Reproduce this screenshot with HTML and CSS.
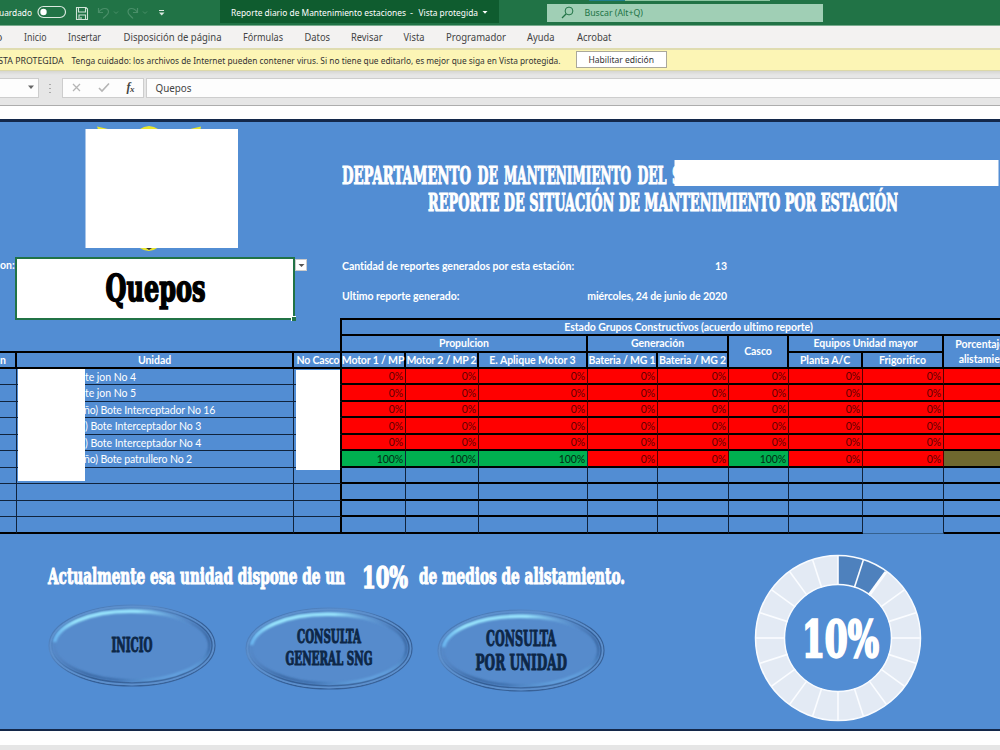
FILE: index.html
```html
<!DOCTYPE html>
<html lang="es">
<head>
<meta charset="utf-8">
<title>Reporte diario de Mantenimiento estaciones</title>
<link rel="stylesheet" href="styles.css">
</head>
<body>
<header class="titlebar">
  <svg class="quick" width="220" height="25" viewBox="0 0 220 25">
    <text x="-7" y="16" class="ui-w" textLength="39" lengthAdjust="spacingAndGlyphs">Guardado</text>
    <rect x="38" y="6.500" width="27.500" height="11" rx="5.500" fill="none" stroke="#dbe9e0" stroke-width="1.200"/>
    <circle cx="43.500" cy="12" r="3.200" fill="#fff"/>
    <path d="M76.500 7.500H86L87.500 9V19.500H76.500ZM78.500 7.500V12H85.500V7.500M79 19.500V15H85.500V19.500M81 19V17" fill="none" stroke="#cfe3d7" stroke-width="1.100"/>
    <path d="M98.500 8V12.500H103M98.500 12.500C102 7 108.500 7.500 108.500 12C108.500 15 105 16 103 18.500" fill="none" stroke="#4a8f69" stroke-width="1.200"/>
    <path d="M114 11.500L116 13.500L118 11.500" fill="none" stroke="#4a8f69"/>
    <path d="M137.500 8V12.500H133M137.500 12.500C134 7 128 7.500 128 12C128 15 131 16 133 18.500" fill="none" stroke="#4a8f69" stroke-width="1.200"/>
    <path d="M143 11.500L145 13.500L147 11.500" fill="none" stroke="#4a8f69"/>
    <path d="M159 10.500H164" stroke="#dbe9e0"/><path d="M159 12.500H164.500L161.700 15.500Z" fill="#dbe9e0"/>
  </svg>
  <div class="doc-name"><svg width="279" height="23">
    <text x="11" y="15.500" class="ui-w" textLength="175" lengthAdjust="spacingAndGlyphs">Reporte diario de Mantenimiento estaciones</text>
    <text x="190" y="15.500" class="ui-w">-</text>
    <text x="198.500" y="15.500" class="ui-w" textLength="59.500" lengthAdjust="spacingAndGlyphs">Vista protegida</text>
    <path d="M262.500 11H267.500L265 13.800Z" fill="#fff"/>
  </svg></div>
  <div class="search"><svg width="276" height="18">
    <circle cx="22" cy="7" r="3.900" fill="none" stroke="#217346"/><path d="M19 10L15 14" stroke="#217346" stroke-width="1.200"/>
    <text x="37.500" y="12" class="ui-g" textLength="58.500" lengthAdjust="spacingAndGlyphs">Buscar (Alt+Q)</text>
  </svg></div>
  <i class="strip"></i>
</header>
<nav class="tabs"><svg width="1000" height="22">
  <text x="-4" y="15">o</text>
  <text x="24" y="15" textLength="22.500" lengthAdjust="spacingAndGlyphs">Inicio</text>
  <text x="68" y="15" textLength="33" lengthAdjust="spacingAndGlyphs">Insertar</text>
  <text x="123.500" y="15" textLength="98" lengthAdjust="spacingAndGlyphs">Disposición de página</text>
  <text x="243" y="15" textLength="40" lengthAdjust="spacingAndGlyphs">Fórmulas</text>
  <text x="304.500" y="15" textLength="25.500" lengthAdjust="spacingAndGlyphs">Datos</text>
  <text x="351" y="15" textLength="31.500" lengthAdjust="spacingAndGlyphs">Revisar</text>
  <text x="403.500" y="15" textLength="21" lengthAdjust="spacingAndGlyphs">Vista</text>
  <text x="446" y="15" textLength="60" lengthAdjust="spacingAndGlyphs">Programador</text>
  <text x="527" y="15" textLength="27.500" lengthAdjust="spacingAndGlyphs">Ayuda</text>
  <text x="577" y="15" textLength="34.500" lengthAdjust="spacingAndGlyphs">Acrobat</text>
</svg></nav>
<div class="warning">
  <svg width="576" height="20">
    <text x="-10" y="11.500" textLength="73.500" lengthAdjust="spacingAndGlyphs">VISTA PROTEGIDA</text>
    <text x="71.500" y="11.500" textLength="489" lengthAdjust="spacingAndGlyphs">Tenga cuidado: los archivos de Internet pueden contener virus. Si no tiene que editarlo, es mejor que siga en Vista protegida.</text>
  </svg>
  <button class="enable"><svg width="89" height="15"><text x="11.500" y="11" textLength="65.500" lengthAdjust="spacingAndGlyphs">Habilitar edición</text></svg></button>
</div>
<div class="formula">
  <div class="fbox name-box"><svg width="38" height="17"><path d="M28 6.500H34L31 10Z" fill="#666"/></svg></div>
  <div class="dots"></div>
  <div class="fbox fx"><svg width="80" height="17">
    <path d="M10 5L17 12M17 5L10 12" stroke="#b5b5b5" stroke-width="1.300"/>
    <path d="M36 9L39 12L46 4.500" fill="none" stroke="#b5b5b5" stroke-width="1.600"/>
    <text x="63.500" y="12" class="fxt">f</text><text x="67" y="12.500" class="fxs">x</text>
  </svg></div>
  <div class="fbox value"><svg width="100" height="17"><text x="8.500" y="12.500" textLength="36" lengthAdjust="spacingAndGlyphs">Quepos</text></svg></div>
</div>
<main class="sheet">
  <section class="top">
    <div class="station-side">
      <svg class="crest" width="160" height="126" viewBox="80 126 160 126">
        <path d="M97 126.500L110 129.500H98ZM201 126.500L188 129.500H200.500ZM139 129.500Q149 122.500 159 129.500ZM139 247.500H158Q149 254.500 139 247.500Z" fill="#e9e62c"/>
        <path d="M146 248H152L149 250Z" fill="#333"/>
        <rect x="85.500" y="129" width="152.500" height="119" fill="#fff"/>
      </svg>
      <div class="station-row">
        <span class="est">on:</span>
        <div class="station"><svg width="274" height="58"><text class="disp station-name" x="88.500" y="40.500" textLength="100" lengthAdjust="spacingAndGlyphs">Quepos</text></svg><i class="handle"></i></div>
        <div class="drop"><svg width="11" height="11"><path d="M2.500 4H8.500L5.500 7Z" fill="#555"/></svg></div>
      </div>
    </div>
    <div class="report-side">
      <svg class="heading" width="658" height="60">
        <g class="disp light">
          <text x="0" y="27.500" textLength="129" lengthAdjust="spacingAndGlyphs">DEPARTAMENTO</text>
          <text x="135.500" y="27.500" textLength="20.500" lengthAdjust="spacingAndGlyphs">DE</text>
          <text x="162" y="27.500" textLength="127" lengthAdjust="spacingAndGlyphs">MANTENIMIENTO</text>
          <text x="295.500" y="27.500" textLength="29" lengthAdjust="spacingAndGlyphs">DEL</text>
          <text x="330" y="27.500" textLength="10" lengthAdjust="spacingAndGlyphs">S</text>
          <text x="86" y="54.500" textLength="470" lengthAdjust="spacingAndGlyphs">REPORTE DE SITUACIÓN DE MANTENIMIENTO POR ESTACIÓN</text>
        </g>
        <rect x="332.500" y="4" width="324" height="26" fill="#fff"/>
      </svg>
      <div class="fact"><span>Cantidad de reportes generados por esta estación:</span><span>13</span></div>
      <div class="fact"><span class="f2">Ultimo reporte generado:</span><span class="f3">miércoles, 24 de junio de 2020</span></div>
    </div>
  </section>
  <section class="grid" id="grid">
    <div class="h estado">Estado Grupos Constructivos (acuerdo ultimo reporte)</div>
    <div class="h prop">Propulcion</div><div class="h gen">Generación</div><div class="h casco">Casco</div><div class="h equi">Equipos Unidad mayor</div><div class="h porc">Porcentaje de alistamiento</div>
    <div class="h lt est-h">n</div><div class="h lt c2">Unidad</div><div class="h lt c3">No Casco</div>
    <div class="h c4">Motor 1 / MP</div><div class="h c5">Motor 2 / MP 2</div><div class="h c6">E. Aplique Motor 3</div><div class="h c7">Bateria / MG 1</div><div class="h c8">Bateria / MG 2</div><div class="h c10">Planta A/C</div><div class="h c11">Frigorifico</div>
  </section>
  <section class="bottom">
    <div class="actions">
      <svg class="message" width="640" height="36">
        <g class="disp light msg">
          <text x="48" y="24.500" textLength="297" lengthAdjust="spacingAndGlyphs">Actualmente esa unidad dispone de un</text>
          <text class="percent" x="362" y="28.500" textLength="46" lengthAdjust="spacingAndGlyphs">10%</text>
          <text x="419" y="24.500" textLength="206" lengthAdjust="spacingAndGlyphs">de medios de alistamiento.</text>
        </g>
      </svg>
      <div class="buttons">
        <svg class="oval" width="168" height="83" viewBox="0 0 168 83">
          <defs>
            <linearGradient id="ring" x1="0" y1="0" x2="1" y2="1"><stop offset="0" stop-color="#3f6ea9"/><stop offset=".3" stop-color="#5688c5"/><stop offset=".6" stop-color="#335d94"/><stop offset="1" stop-color="#3c659b"/></linearGradient>
            <linearGradient id="inner" x1="0" y1="0" x2=".7" y2="1"><stop offset="0" stop-color="#5f97d8"/><stop offset=".5" stop-color="#5080be"/><stop offset=".72" stop-color="#35619a"/><stop offset=".85" stop-color="#3a6aa8"/><stop offset="1" stop-color="#6eb2ee"/></linearGradient>
            <linearGradient id="arc" x1="0" y1="0" x2="1" y2="0"><stop offset="0" stop-color="#6bb8f2"/><stop offset=".15" stop-color="#9be9ff"/><stop offset=".6" stop-color="#9be9ff"/><stop offset="1" stop-color="#6aa9e6" stop-opacity="0"/></linearGradient>
            <filter id="soft" x="-10%" y="-20%" width="120%" height="140%"><feGaussianBlur stdDeviation=".8"/></filter>
            <g id="oval-base">
              <ellipse cx="84" cy="41.500" rx="83" ry="40.500" fill="#568bcc" stroke="url(#ring)" stroke-width="1.200"/>
              <ellipse cx="84" cy="41.500" rx="81.500" ry="39" fill="none" stroke="#5e90cc" stroke-width="1.500"/>
              <ellipse cx="84" cy="41.500" rx="80" ry="37.300" fill="none" stroke="url(#ring)" stroke-width="1.300"/>
              <ellipse cx="84" cy="41.500" rx="77.500" ry="35" fill="none" stroke="url(#inner)" stroke-width="2.200" filter="url(#soft)"/>
              <path d="M6.500 38C10 21 41 7.500 82 7.300C108 7 130 12 145 21" fill="none" stroke="url(#arc)" stroke-width="3.400" filter="url(#soft)"/>
            </g>
          </defs>
          <use href="#oval-base"/>
          <g class="disp navy n20"><text x="63.500" y="47.800" textLength="41" lengthAdjust="spacingAndGlyphs">INICIO</text></g>
        </svg>
        <svg class="oval second" width="168" height="83" viewBox="0 0 168 83"><use href="#oval-base"/>
          <g class="disp navy n19"><text x="52" y="36" textLength="64" lengthAdjust="spacingAndGlyphs">CONSULTA</text><text x="40.500" y="58" textLength="87" lengthAdjust="spacingAndGlyphs">GENERAL SNG</text></g>
        </svg>
        <svg class="oval third" width="168" height="83" viewBox="0 0 168 83"><use href="#oval-base"/>
          <g class="disp navy n23"><text x="49" y="36.500" textLength="70" lengthAdjust="spacingAndGlyphs">CONSULTA</text><text x="38.500" y="60.500" textLength="91.500" lengthAdjust="spacingAndGlyphs">POR UNIDAD</text></g>
        </svg>
      </div>
    </div>
    <svg class="donut" width="168" height="168" viewBox="-84 -84 168 168">
      <circle r="68" fill="none" stroke="#e3eaf4" stroke-width="29"/>
      <path d="M0 -82.500A82.500 82.500 0 0 1 48.500 -66.700L31.400 -43.300A53.500 53.500 0 0 0 0 -53.500Z" fill="#4e81bd"/>
      <g id="ticks" stroke="#fafcff" stroke-width="1.600"></g>
      <path d="M31.200 -43L47.800 -65.800" stroke="#fafcff" stroke-width="3"/>
      <circle r="82.500" fill="none" stroke="#f8fbff" stroke-width="1.500"/><circle r="53.500" fill="none" stroke="#f8fbff" stroke-width="1.500"/>
      <g class="disp light gauge"><text x="-36" y="18.500" textLength="77" lengthAdjust="spacingAndGlyphs">10%</text></g>
    </svg>
  </section>
</main>
<div class="foot"></div>
<script src="sheet.js"></script>
</body>
</html>
```
FILE: sheet.js
```js
const grid = document.getElementById('grid');
const units = ['te jon No 4', 'te jon No 5', 'ño) Bote Interceptador No 16', ') Bote Interceptador No 3', ') Bote Interceptador No 4', 'ño) Bote patrullero No 2'];
const full = [0, 1, 2, 5];

function add(row, col, cls, text) {
  const el = document.createElement('div');
  el.className = cls;
  el.style.gridArea = row + ' / ' + col;
  if (text) {
    const s = document.createElement('span');
    s.textContent = text;
    el.append(s);
  }
  grid.append(el);
}

for (let r = 0; r < 10; r++) {
  const last = r === 9 ? ' last' : '';
  add(r + 4, 1, 'l' + last, '');
  add(r + 4, 2, 'l unit' + last + (r < 6 && units[r][0] === 'ñ' ? ' long' : ''), units[r]);
  add(r + 4, 3, 'l edge' + last, '');
  for (let c = 0; c < 9; c++) {
    const ok = r === 5 && full.includes(c);
    let state = r > 5 ? '' : ok ? ' ok' : ' bad';
    if (r === 5 && c === 8) state = ' mid';
    if (r === 9 && c === 7) state += ' open';
    add(r + 4, c + 4, 'd' + state, r < 6 && c < 8 ? (ok ? '100%' : '0%') : '');
  }
}
for (const cls of ['mask mask-unit', 'mask mask-hull']) {
  const m = document.createElement('div');
  m.className = cls;
  grid.append(m);
}

const ticks = document.getElementById('ticks');
for (let i = 0; i < 20; i++) {
  const a = i * Math.PI / 10;
  const l = document.createElementNS('http://www.w3.org/2000/svg', 'line');
  l.setAttribute('x1', 53 * Math.sin(a));
  l.setAttribute('y1', -53 * Math.cos(a));
  l.setAttribute('x2', 82 * Math.sin(a));
  l.setAttribute('y2', -82 * Math.cos(a));
  ticks.append(l);
}
```
FILE: styles.css
```css
* { box-sizing: border-box; }
body { margin: 0; width: 1000px; height: 750px; overflow: hidden; background: #fff; font-family: "Noto Sans", "Open Sans", sans-serif; }
svg { display: block; flex: none; }
svg text { font-size: 10.5px; fill: #444; }
svg .ui-w { font-size: 9.5px; fill: #fff; }
svg .ui-g { font-size: 9.5px; fill: #217346; }
.titlebar { position: relative; display: flex; height: 26px; background: #217346; border-bottom: 1px solid #79ab8e; }
.doc-name { width: 279px; height: 23px; background: #0f5c2f; }
.search { width: 276px; height: 18px; margin: 4px 0 0 48px; background: #a0cfb5; }
.strip { position: absolute; left: 589px; top: 0; width: 181px; height: 1px; background: linear-gradient(90deg, #1f7f8c 36px, #8cc5a2 36px); }
.tabs { height: 22px; background: #f3f2f1; }
.warning { display: flex; height: 23px; padding-top: 2px; background: #fcf5b5; border-top: 2px solid #dfdcb0; border-bottom: 1px solid #dcd8a8; }
.warning svg text { font-size: 9.5px; fill: #333; }
.enable { width: 91px; height: 17px; margin-top: -1px; padding: 0; border: 1px solid #aaa89a; background: #fff; font-family: inherit; }
.formula { display: flex; height: 35px; padding-top: 7px; background: linear-gradient(#d6d6d2, #e6e6e6 4px); border-bottom: 1px solid #adadad; }
.fbox { height: 20px; border: 1px solid #cdcdcd; background: #fdfdfd; }
.name-box { width: 39px; border-left: 0; }
.dots { width: 2px; height: 9px; margin: 6px 11px 0 10px; background: repeating-linear-gradient(#aaa 0 1px, transparent 1px 4px); }
.fx { width: 82px; margin-right: 2px; }
.value { flex: 1; border-right: 0; }
svg .fxt { font: italic bold 12px "Liberation Serif", serif; }
svg .fxs { font: italic bold 9px "Liberation Serif", serif; }
.disp { font-family: "DejaVu Serif Condensed", "DejaVu Serif", serif; font-weight: bold; font-size: 23.5px; stroke-width: 1px; }
.disp text { font-size: inherit; fill: inherit; }
.light { fill: #fff; stroke: #fff; }
.msg { font-size: 22px; }
.msg .percent { font-size: 29px; stroke-width: 1.4px; }
.gauge { font-size: 51px; stroke-width: 2.4px; }
.navy { fill: #0d2747; stroke: #0d2747; }
.n20 { font-size: 19.5px; }
.n19 { font-size: 19px; }
.n23 { font-size: 22.5px; }
svg .station-name { font-size: 37px; fill: #000; stroke: #000; stroke-width: 1.6px; }
.sheet { height: 612px; margin-top: 13px; background: #528dd3; border-top: 3px solid #14284a; border-bottom: 2px solid #14284a; color: #fff; font: bold 10.5px Lato, sans-serif; font-variant-ligatures: none; }
.top { display: flex; height: 196px; }
.station-side { width: 342px; padding-top: 4px; flex: none; }
.crest { margin-left: 80px; }
.station-row { display: flex; margin-top: 5px; }
.est { width: 15px; padding-top: 2px; white-space: nowrap; direction: rtl; unicode-bidi: plaintext; }
.station { position: relative; width: 280px; height: 63px; background: #fff; border: 2px solid #217346; z-index: 1; padding-top: 1px; }
.handle { position: absolute; right: -3px; bottom: -3px; width: 5px; height: 5px; background: #217346; border-top: 1px solid #fff; border-left: 1px solid #fff; }
.drop { width: 12px; height: 12px; margin-top: 2px; background: #fff; border: 1px solid #ccc; }
.report-side { width: 658px; }
.heading { margin-top: 34px; }
.fact { display: flex; justify-content: space-between; width: 385px; height: 30px; line-height: 14px; white-space: nowrap; letter-spacing: -.03px; }
.f3 { letter-spacing: -.1px; }
.heading + .fact { margin-top: 43px; }
.grid { position: relative; display: grid; grid-template-columns: 17px 277px 48px 64px 73px 109px 70px 71px 60px 74px 81px 93px; grid-template-rows: 18px 17px 16px 16px 17px 16px 17px 16px 17px 16px 17px 16px 17px; width: 1037px; }
.h { display: flex; align-items: center; justify-content: center; border-right: 2px solid #000; border-bottom: 2px solid #000; text-align: center; white-space: nowrap; line-height: 13px; letter-spacing: -.05px; }
.estado { grid-area: 1 / 4 / 2 / 13; border-top: 2px solid #000; box-shadow: -2px 0 #000; }
.prop { grid-area: 2 / 4 / 3 / 7; box-shadow: -2px 0 #000; }
.gen { grid-area: 2 / 7 / 3 / 9; }
.casco { grid-area: 2 / 9 / 4 / 10; }
.equi { grid-area: 2 / 10 / 3 / 12; }
.porc { grid-area: 2 / 12 / 4 / 13; padding-right: 5px; white-space: normal; line-height: 15px; }
.lt { box-shadow: 0 -2px #000; }
.est-h { grid-area: 3 / 1; justify-content: flex-start; }
.c2 { grid-area: 3 / 2; } .c3 { grid-area: 3 / 3; letter-spacing: -.2px; padding-left: 2px; } .c4 { grid-area: 3 / 4; letter-spacing: -.16px; } .c5 { grid-area: 3 / 5; letter-spacing: -.2px; } .c6 { grid-area: 3 / 6; }
.c7 { grid-area: 3 / 7; letter-spacing: -.2px; } .c8 { grid-area: 3 / 8; letter-spacing: -.2px; } .c10 { grid-area: 3 / 10; } .c11 { grid-area: 3 / 11; }
.l, .d { display: flex; align-items: center; padding-top: 1px; font-weight: normal; white-space: nowrap; line-height: 13px; }
.l { border-right: 1px solid #10233c; border-bottom: 1px solid #10233c; }
.l.edge { border-right: 2px solid #000; }
.l.last { border-bottom: 2px solid #000; }
.unit { padding-left: 68px; letter-spacing: -.05px; }
.long { letter-spacing: -.14px; padding-left: 67px; }
.d { justify-content: flex-end; padding-right: 2px; border-right: 1px solid #10233c; border-bottom: 2px solid #000; color: #5e0000; letter-spacing: -.1px; }
.bad { background: #f00; border-right-color: #500; }
.ok { background: #00b050; color: #032c14; }
.mid { background: #6f682e; }
.open { border-bottom: 1px solid #35618f; }
.mask { position: absolute; background: #fff; }
.mask-unit { left: 18px; top: 51px; width: 67px; height: 112px; }
.mask-hull { left: 296px; top: 52px; width: 44px; height: 100px; }
.bottom { display: flex; }
.actions { width: 640px; }
.message { margin-top: 25px; }
.buttons { display: flex; padding: 9px 0 0 48px; }
.second { margin: 3px 0 0 29px; }
.third { margin: 5px 0 0 24px; }
.donut { margin: 20px 0 0 114px; }
.foot { height: 5px; margin-top: 14px; background: #e6e6e6; }
```
